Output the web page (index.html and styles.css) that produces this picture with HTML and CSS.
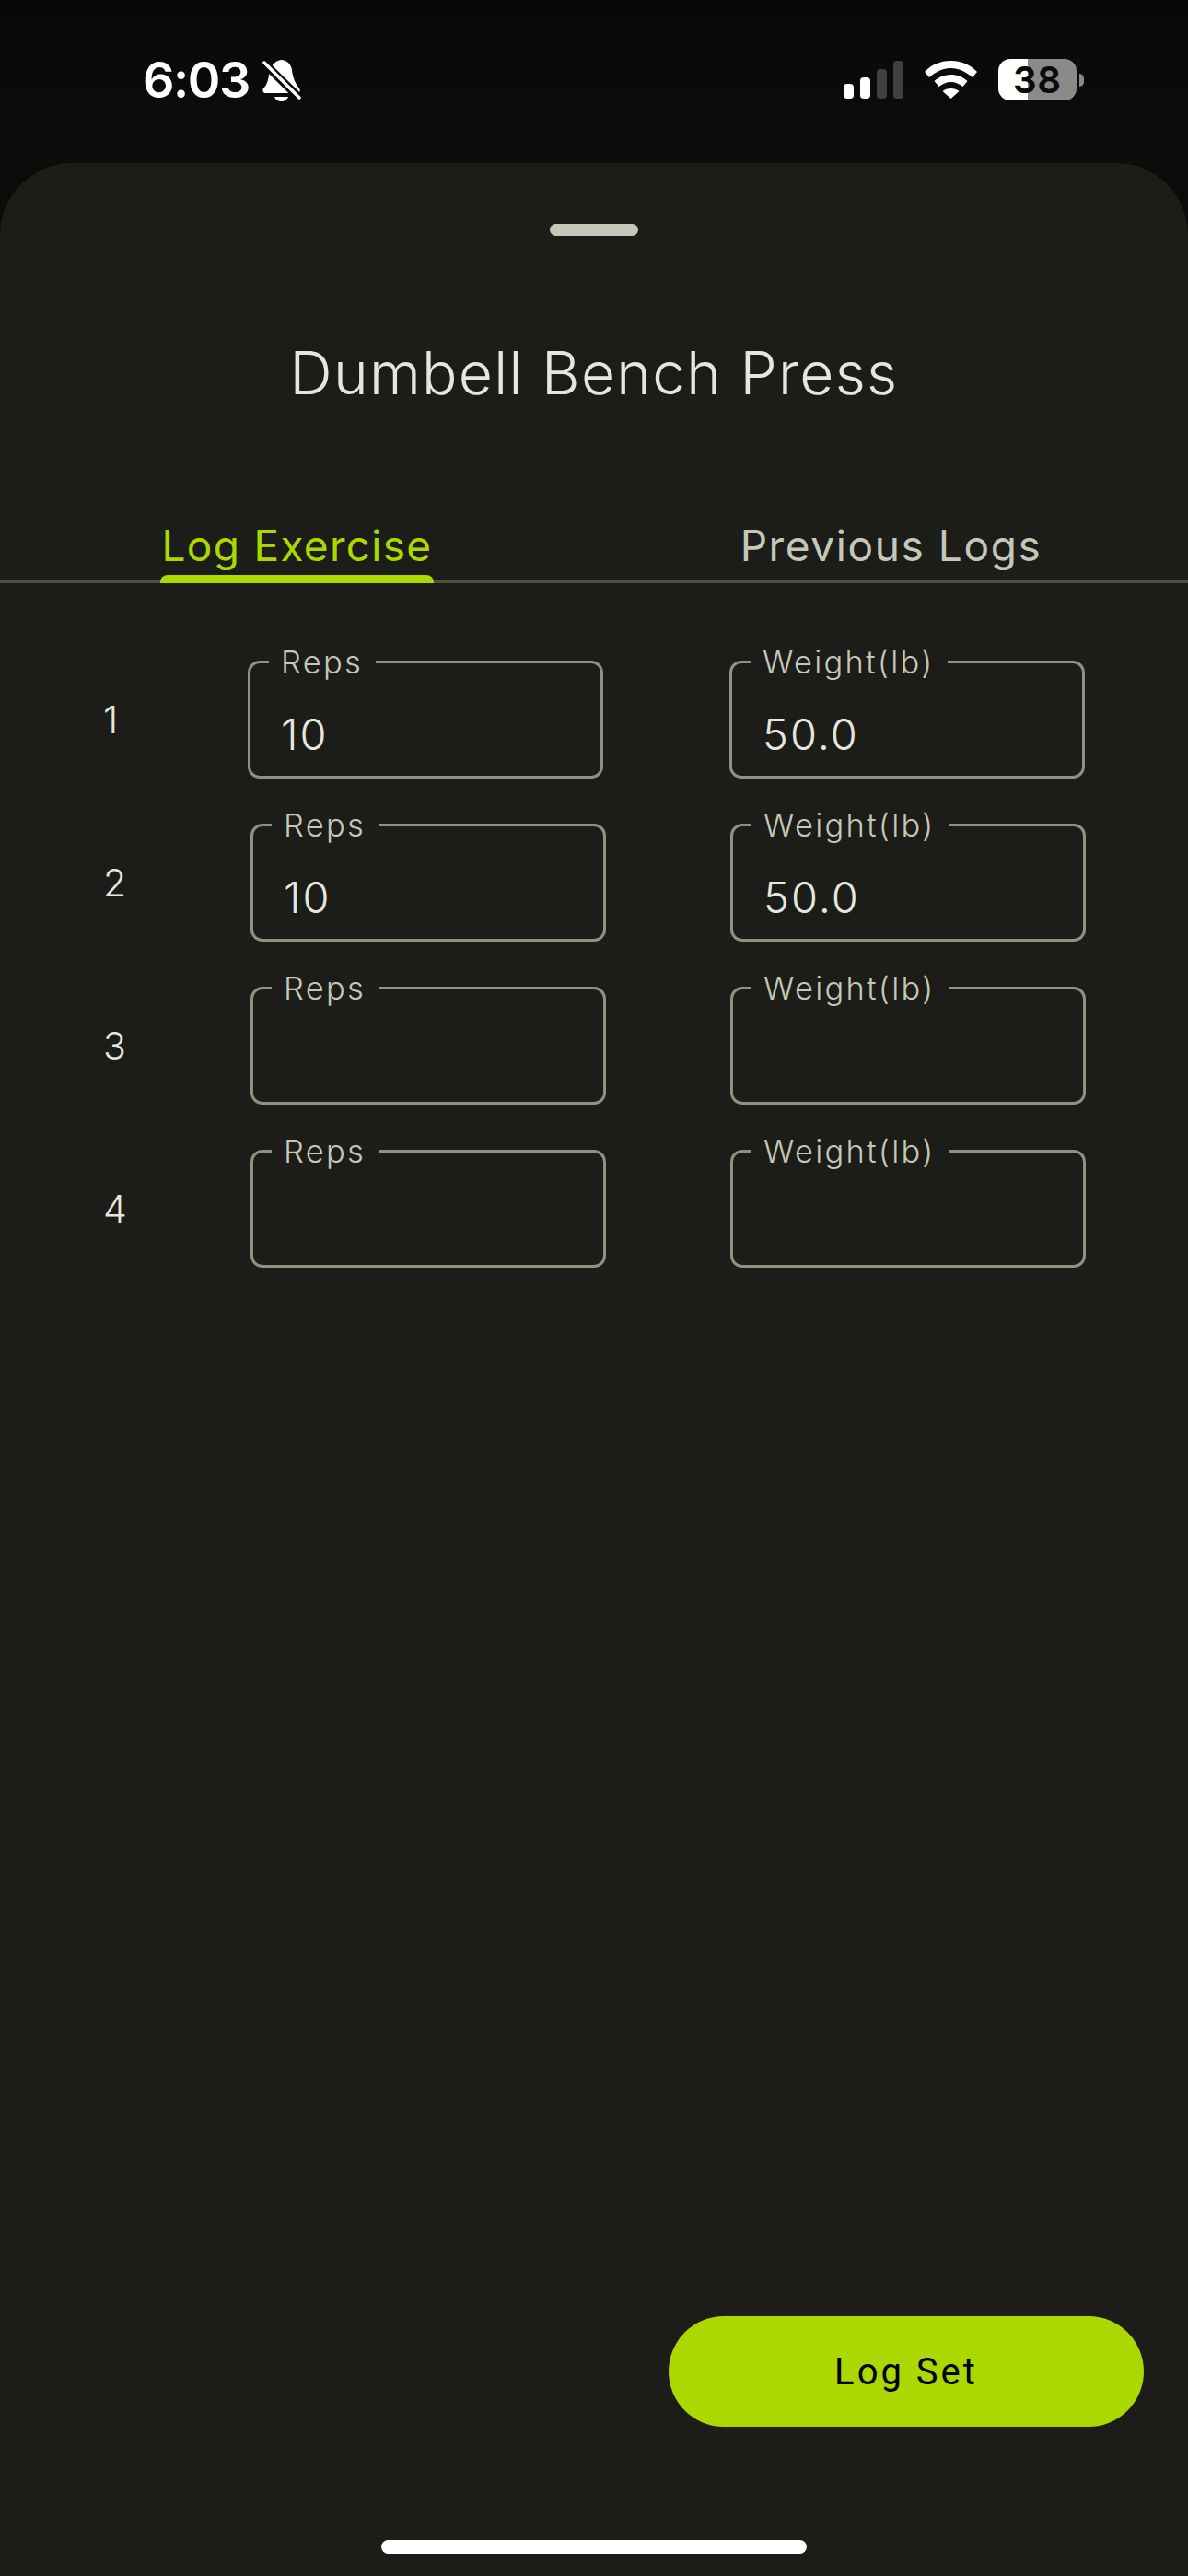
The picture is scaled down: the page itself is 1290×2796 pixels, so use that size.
FILE: index.html
```html
<!DOCTYPE html>
<html lang="en">
<head>
    <meta charset="UTF-8">
    <meta name="viewport" content="width=device-width, initial-scale=1.0">
    <title>Dumbell Bench Press</title>
    <link rel="stylesheet" href="styles.css">
</head>
<body>
    <div class="status-bar">
        <div class="status-left">
            <span class="clock">6:03</span>
            <svg class="bell" width="42" height="45" viewBox="0 0 42 45">
                <path fill="#fff" d="M20 0c7 0 11 5 12 11 1 9 4 15 8 20 1.500 2 .5 5-2 5H3c-2.500 0-3.500-3-2-5 3-3 5-7 6-15C8 8 13 1 20 0z"/>
                <path fill="#fff" d="M13 40h15c-1 3-4 5-7.500 5S14 43 13 40z"/>
                <path stroke="#0b0c0a" stroke-width="9" fill="none" d="M-1 1l44 43"/>
                <path stroke="#fff" stroke-width="3.500" stroke-linecap="round" fill="none" d="M2 3l38 38"/>
            </svg>
        </div>
        <div class="status-right">
            <div class="signal">
                <span class="bar bar-1"></span>
                <span class="bar bar-2"></span>
                <span class="bar bar-3"></span>
                <span class="bar bar-4"></span>
            </div>
            <svg class="wifi" width="57" height="41" viewBox="0 0 57 41">
                <path fill="#fff" d="M28.500 0c11 0 21 4 28.500 12l-5 6C45 12 37 8 28.500 8S12 12 5 18l-5-6C7.500 4 17.500 0 28.500 0z"/>
                <path fill="#fff" d="M28.500 15c7 0 13 2.500 18 7l-5 6c-4-3-8-5-13-5s-9 2-13 5l-5-6c5-4.500 11-7 18-7z"/>
                <path fill="#fff" d="M28.500 30c3.500 0 6.500 1 9 3l-9 8-9-8c2.500-2 5.500-3 9-3z"/>
            </svg>
            <div class="battery">
                <div class="battery-body"><span class="battery-level">38</span></div>
                <span class="battery-cap"></span>
            </div>
        </div>
    </div>

    <div class="sheet">
        <div class="handle"></div>
        <h1 class="title">Dumbell Bench Press</h1>

        <div class="tabs">
            <div class="tab active"><span class="tab-label">Log Exercise</span></div>
            <div class="tab"><span class="tab-label">Previous Logs</span></div>
        </div>

        <div class="sets">
            <div class="set-row first">
                <span class="set-num">1</span>
                <fieldset class="field reps"><legend>Reps</legend><span class="value">10</span></fieldset>
                <fieldset class="field weight"><legend>Weight(lb)</legend><span class="value">50.0</span></fieldset>
            </div>
            <div class="set-row">
                <span class="set-num">2</span>
                <fieldset class="field reps"><legend>Reps</legend><span class="value">10</span></fieldset>
                <fieldset class="field weight"><legend>Weight(lb)</legend><span class="value">50.0</span></fieldset>
            </div>
            <div class="set-row">
                <span class="set-num">3</span>
                <fieldset class="field reps"><legend>Reps</legend><span class="value"></span></fieldset>
                <fieldset class="field weight"><legend>Weight(lb)</legend><span class="value"></span></fieldset>
            </div>
            <div class="set-row">
                <span class="set-num">4</span>
                <fieldset class="field reps"><legend>Reps</legend><span class="value"></span></fieldset>
                <fieldset class="field weight"><legend>Weight(lb)</legend><span class="value"></span></fieldset>
            </div>
        </div>

        <div class="actions">
            <button class="log-btn">Log Set</button>
        </div>
        <div class="home-indicator"></div>
    </div>
</body>
</html>
```

FILE: styles.css
```css
* {
    box-sizing: border-box;
}
html, body {
    margin: 0;
    padding: 0;
}
body {
    width: 1290px;
    height: 2796px;
    overflow: hidden;
    background: #0b0c0a;
    font-family: Inter, 'Liberation Sans', sans-serif;
    display: flex;
    flex-direction: column;
}

/* status bar */
.status-bar {
    height: 177px;
    flex: none;
    display: flex;
    justify-content: space-between;
    padding: 64px 113px 0 155px;
    background: linear-gradient(#070807, #0d0e0c);
}
.status-left {
    display: flex;
    align-items: flex-start;
    gap: 14px;
}
.clock {
    font-size: 54px;
    font-weight: 600;
    line-height: 54px;
    letter-spacing: -1.500px;
    margin-top: -4px;
    color: #fff;
}
.bell {
    margin-top: 1px;
}
.status-right {
    display: flex;
    align-items: center;
    gap: 23px;
    height: 45px;
}
.signal {
    display: flex;
    align-items: flex-end;
    gap: 7px;
    height: 41px;
}
.bar {
    width: 11px;
    border-radius: 4px;
    background: #fff;
}
.bar-1 { height: 16px; }
.bar-2 { height: 23px; }
.bar-3 { height: 32px; background: #3f403f; }
.bar-4 { height: 41px; background: #3f403f; }
.battery {
    display: flex;
    align-items: center;
    gap: 3px;
}
.battery-body {
    width: 85px;
    height: 45px;
    border-radius: 13px;
    background: linear-gradient(90deg, #fff 38%, #8a8a8a 38%);
    display: flex;
    align-items: center;
    justify-content: center;
}
.battery-level {
    font-size: 39px;
    font-weight: 700;
    color: #0b0c0a;
    letter-spacing: 1px;
}
.battery-cap {
    width: 5px;
    height: 14px;
    border-radius: 0 5px 5px 0;
    background: #8a8a8a;
}

/* sheet */
.sheet {
    flex: 1;
    background: #1c1d19;
    border-radius: 78px 78px 0 0;
    display: flex;
    flex-direction: column;
    align-items: stretch;
    padding-top: 66px;
}
.handle {
    width: 96px;
    height: 13px;
    border-radius: 7px;
    background: #c5c8b8;
    align-self: center;
}
.title {
    margin: 111px 0 0;
    font-size: 64px;
    line-height: 76px;
    font-weight: 300;
    letter-spacing: 1.300px;
    color: #e6e6df;
    text-align: center;
}

/* tabs */
.tabs {
    margin-top: 110px;
    display: flex;
    border-bottom: 3px solid #4e5040;
    height: 80px;
}
.tab {
    width: 50%;
    display: flex;
    justify-content: center;
}
.tab-label {
    position: relative;
    font-size: 46px;
    line-height: 58px;
    letter-spacing: 1.600px;
    color: #c5c8b8;
    height: 80px;
    padding: 10px 2px 0;
}
.tab.active .tab-label {
    color: #aad800;
    letter-spacing: 1.300px;
}
.tab.active .tab-label::after {
    content: "";
    position: absolute;
    left: 0;
    right: 0;
    bottom: 0;
    height: 9px;
    border-radius: 8px 8px 0 0;
    background: #aad800;
}

/* sets */
.sets {
    display: flex;
    flex-direction: column;
    gap: 30px;
    padding-top: 65px;
    flex: 1;
}
.set-row {
    display: flex;
    align-items: flex-end;
    padding-left: 112px;
}
.set-num {
    width: 160px;
    align-self: center;
    font-size: 41px;
    font-weight: 300;
    color: #e6e6df;
    margin-top: 19px;
}
.set-row.first .set-num {
    width: 157px;
}
.field {
    margin: 0;
    width: 386px;
    height: 147px;
    border: 3px solid #90917f;
    border-radius: 13px;
    padding: 0 33px;
}
.field.weight {
    margin-left: 135px;
}
.set-row.first .field.weight {
    margin-left: 137px;
}
.field legend {
    padding: 0 14px 0 13px;
    margin-left: -13px;
    font-size: 34.500px;
    line-height: 41px;
    font-weight: 300;
    letter-spacing: 2.300px;
    color: #c5c8b8;
}
.value {
    display: block;
    height: 56px;
    font-size: 47px;
    line-height: 56px;
    font-weight: 300;
    letter-spacing: 2px;
    color: #e6e6df;
    margin-top: 30px;
}

/* bottom */
.actions {
    display: flex;
    justify-content: flex-end;
    padding-right: 48px;
}
.log-btn {
    width: 516px;
    height: 120px;
    border: none;
    border-radius: 60px;
    background: #aad800;
    color: #000;
    font-family: Roboto, sans-serif;
    font-size: 40px;
    letter-spacing: 3px;
}
.home-indicator {
    width: 462px;
    height: 15px;
    margin: 123px auto 24px;
    border-radius: 8px;
    background: #fff;
}
```
